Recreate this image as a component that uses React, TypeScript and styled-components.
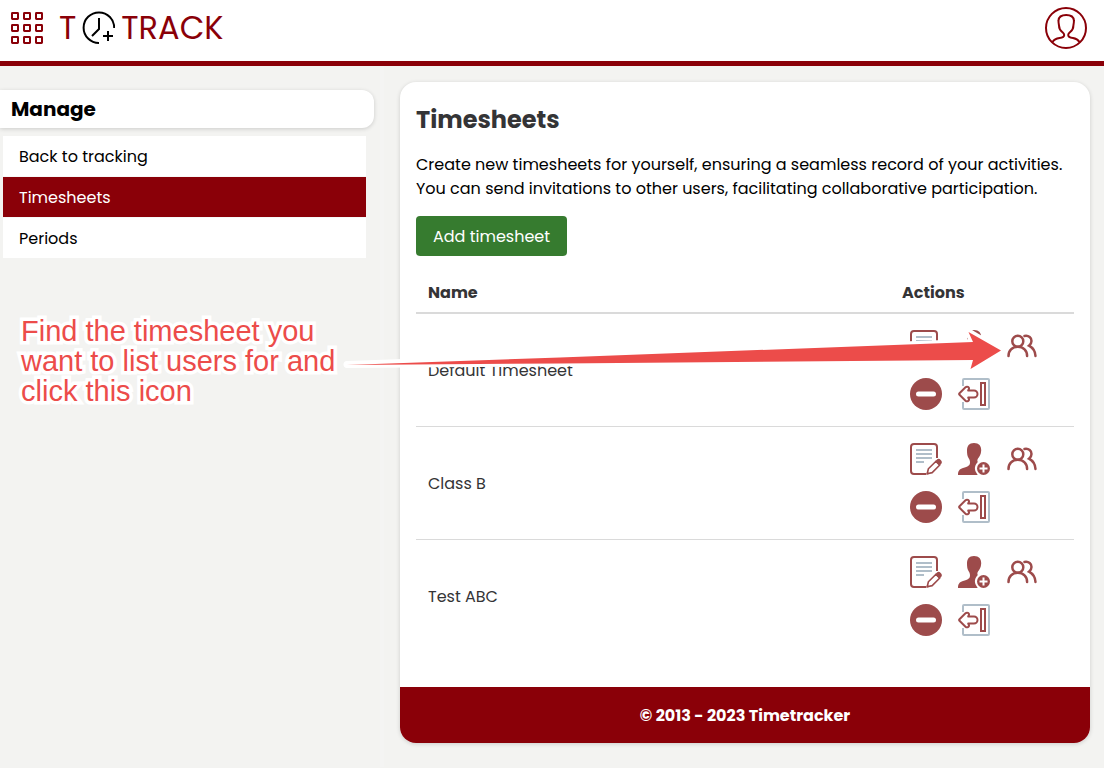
import React from 'react';
import styled, { createGlobalStyle } from 'styled-components';

const maroon = '#8a0008';
const iconRed = '#9d4b4b';
const iconGrey = '#b0bec9';

const GlobalStyle = createGlobalStyle`
  *, *::before, *::after { box-sizing: border-box; }
  body {
    margin: 0;
    background: #f3f3f1;
    color: #000;
    font-family: Poppins, Inter, sans-serif;
    font-size: 16px;
    line-height: 24px;
  }
`;

const Page = styled.div`
  position: relative;
  min-height: 100vh;
`;

const Header = styled.header`
  display: flex;
  align-items: center;
  height: 66px;
  padding: 0 16px 5px 10px;
  background: #fff;
  border-bottom: 5px solid ${maroon};
`;

const IconButton = styled.button`
  display: flex;
  padding: 0;
  border: 0;
  background: none;
  cursor: pointer;
`;

const Brand = styled.a`
  display: flex;
  align-items: center;
  gap: 6px;
  margin-left: 15px;
  margin-right: auto;
  color: ${maroon};
  font-size: 32px;
  line-height: 48px;
  text-decoration: none;
`;

const Columns = styled.div`
  display: grid;
  grid-template-columns: 384px minmax(0, 1fr);
`;

const Sidebar = styled.aside`
  padding: 24px 6px 24px 0;
  border-right: 4px solid #f4f4f3;
`;

const SidebarTitle = styled.h2`
  margin: 0 0 8px;
  padding: 5px 11px;
  background: #fff;
  border-radius: 0 12px 12px 0;
  box-shadow: 0 1px 4px rgba(0, 0, 0, 0.16);
  font-size: 20px;
  line-height: 28px;
  font-weight: 700;
`;

const Nav = styled.nav`
  display: grid;
  gap: 1px;
  margin: 0 8px 0 3px;
  background: #f8f8f7;
`;

const NavLink = styled.a<{ $active?: boolean }>`
  padding: 9px 16px 7px;
  background: ${(p) => (p.$active ? maroon : '#fff')};
  color: ${(p) => (p.$active ? '#fff' : '#000')};
  text-decoration: none;
`;

const Main = styled.main`
  padding: 16px 14px 24px 16px;
`;

const Card = styled.div`
  overflow: hidden;
  background: #fff;
  border-radius: 16px;
  box-shadow: 0 1px 4px rgba(0, 0, 0, 0.16);
`;

const Content = styled.section`
  padding: 21px 16px 35px;
`;

const Title = styled.h1`
  margin: 0 0 16px;
  color: #343436;
  font-size: 24px;
  line-height: 34px;
  font-weight: 700;
`;

const Intro = styled.p`
  margin: 0 0 15px;
`;

const AddButton = styled.button`
  height: 40px;
  padding: 2px 17px 0;
  border: 0;
  border-radius: 4px;
  background: #367b2f;
  color: #fff;
  font: inherit;
  cursor: pointer;
`;

const Table = styled.table`
  width: 100%;
  margin-top: 16px;
  border-collapse: separate;
  border-spacing: 0;
  color: #343436;
`;

const HeadCell = styled.th<{ $actions?: boolean }>`
  width: ${(p) => (p.$actions ? '184px' : 'auto')};
  padding: 9px 12px 7px;
  border-bottom: 2px solid #dadada;
  font-weight: 700;
  text-align: left;
`;

const Row = styled.tr`
  &:not(:last-child) > td { border-bottom: 1px solid #dadada; }
`;

const Cell = styled.td`
  padding: 8px 12px;
`;

const NameCell = styled(Cell)`
  padding: 9px 12px 7px;
`;

const Actions = styled.div`
  display: flex;
  flex-wrap: wrap;
`;

const ActionButton = styled(IconButton)`
  padding: 8px;
`;

const Footer = styled.footer`
  padding: 17px 16px 15px;
  background: ${maroon};
  color: #fff;
  font-weight: 700;
  text-align: center;
`;

const Note = styled.p`
  position: absolute;
  top: 316px;
  left: 21px;
  width: 328px;
  margin: 0;
  color: #ec4c4a;
  font-family: 'Liberation Sans', sans-serif;
  font-size: 29px;
  line-height: 30px;
  -webkit-text-stroke: 7px #fff;
  paint-order: stroke fill;
  stroke-linejoin: round;
  pointer-events: none;
`;

const Arrow = styled.svg`
  position: absolute;
  top: 320px;
  left: 336px;
  pointer-events: none;
`;

const GridIcon = () => (
  <svg width="34" height="34" viewBox="0 0 34 34" fill="none" stroke={maroon} strokeWidth="2">
    {[2, 14, 26].map((y) =>
      [2, 14, 26].map((x) => <rect key={`${x}-${y}`} x={x} y={y} width="6" height="6" rx="0.4" />),
    )}
  </svg>
);

const ClockIcon = () => (
  <svg width="33" height="34" viewBox="0 0 33 34" fill="none" stroke="#000" strokeWidth="2">
    <path d="M17 32A15.3 15.3 0 1 1 32.200 17" />
    <path d="M17 7v11l-7 7" />
    <path d="M26 20v10M21 25h10" />
  </svg>
);

const ProfileIcon = () => (
  <svg width="44" height="44" viewBox="0 0 44 44" fill="none" stroke={maroon} strokeWidth="2">
    <circle cx="22" cy="22" r="20" />
    <path d="M8.500 36c1.500-2.500 4-3.600 7-4 3-.3 4.700-1 4.700-3 0-1.500-.8-2-2-3-2.200-1.800-3.200-4-3.200-6.500-.5-2.500-.7-3.500-.5-5C14.800 10.500 17.500 9 22.200 9s7.400 1.500 7.700 5.500c.2 1.500 0 2.500-.5 5 0 2.500-1 4.700-3.200 6.500-1.200 1-2 1.500-2 3 0 2 1.700 2.700 4.700 3 3 .4 5.100 1.500 6.600 4" />
  </svg>
);

const EditIcon = () => (
  <svg width="32" height="32" viewBox="0 0 32 32" fill="none" stroke={iconRed} strokeWidth="2">
    <path d="M16 31H4a3 3 0 0 1-3-3V4a3 3 0 0 1 3-3h20a3 3 0 0 1 3 3v11" />
    <path d="M6 7h16M6 11h16M6 15h16M6 19h8" stroke={iconGrey} />
    <path d="m17.200 30.800 1.200-5L26 18.200l3.800 3.800-7.600 7.600z" strokeWidth="1.600" strokeLinejoin="round" />
    <path d="m25 18.400 2-2c1.200-.9 2.500-.7 3.700.6 1.300 1.200 1.500 2.600.6 3.700l-2 2zM16.300 31.700l.8-3 2.200 2.200z" fill={iconRed} stroke="none" />
  </svg>
);

const InviteIcon = () => (
  <svg width="32" height="32" viewBox="0 0 32 32" fill={iconRed}>
    <path d="M16 0c5 0 7.400 3 7.200 7.500-.2 4-1.700 6-3.200 8-.8 1.200-.8 2.500-.2 3.500-3 3-4 7-1.300 11l1.200 2H0c0-4 1.500-6 5-7 5-1.500 7-2.500 7-5.500 0-2-.5-3-1.200-4C9.300 13.500 9 10.500 9 7.500 9 3 11 0 16 0z" />
    <circle cx="25.500" cy="25.500" r="6.500" />
    <path d="M25.500 21.500v8M21.500 25.500h8" stroke="#fff" strokeWidth="2" />
  </svg>
);

const UsersIcon = () => (
  <svg width="32" height="32" viewBox="0 0 32 32" fill="none" stroke={iconRed} strokeWidth="2.500" strokeLinecap="round">
    <circle cx="11.800" cy="11.300" r="5.500" />
    <path d="M2.500 26c0-5.500 3.700-9.200 9.300-9.200s9.300 3.700 9.300 9.200M18.500 6c4.500-.8 7 2 7 5 0 2-1 3.500-2.500 4.700 3.700 2 6.200 5.300 6.500 10.300" />
  </svg>
);

const RemoveIcon = () => (
  <svg width="32" height="32" viewBox="0 0 32 32">
    <circle cx="16" cy="16" r="16" fill={iconRed} />
    <path d="M8.500 16h15" stroke="#fff" strokeWidth="5" strokeLinecap="round" />
  </svg>
);

const LeaveIcon = () => (
  <svg width="32" height="32" viewBox="0 0 32 32" fill="none" stroke={iconRed} strokeWidth="2">
    <path d="M5 8V2q0-1 1-1h24q1 0 1 1v28q0 1-1 1H6q-1 0-1-1v-6" stroke={iconGrey} />
    <path d="M23 5h4v22h-4z" />
    <path d="M1.500 16.800a1.200 1.200 0 0 1 0-1.600L7.500 9.300c1.600-1.400 4-.2 3.400 1.700l-.7 1.500h5.800a3.500 3.500 0 0 1 0 7h-5.800l.7 1.500c.6 1.900-1.800 3.100-3.400 1.700z" strokeLinejoin="round" />
  </svg>
);

const actions = [
  { label: 'Edit', Icon: EditIcon },
  { label: 'Invite user', Icon: InviteIcon },
  { label: 'List users', Icon: UsersIcon },
  { label: 'Remove', Icon: RemoveIcon },
  { label: 'Leave', Icon: LeaveIcon },
];

const timesheets = ['Default Timesheet', 'Class B', 'Test ABC'];

export default function App() {
  return (
    <>
      <GlobalStyle />
      <Page>
        <Header>
          <IconButton type="button" aria-label="Menu"><GridIcon /></IconButton>
          <Brand href="#">
            <span>T</span>
            <ClockIcon />
            <span>TRACK</span>
          </Brand>
          <IconButton type="button" aria-label="Profile"><ProfileIcon /></IconButton>
        </Header>
        <Columns>
          <Sidebar>
            <SidebarTitle>Manage</SidebarTitle>
            <Nav>
              <NavLink href="#">Back to tracking</NavLink>
              <NavLink href="#" $active>Timesheets</NavLink>
              <NavLink href="#">Periods</NavLink>
            </Nav>
          </Sidebar>
          <Main>
            <Card>
              <Content>
                <Title>Timesheets</Title>
                <Intro>
                  Create new timesheets for yourself, ensuring a seamless record of your activities.
                  You can send invitations to other users, facilitating collaborative participation.
                </Intro>
                <AddButton type="button">Add timesheet</AddButton>
                <Table>
                  <thead>
                    <tr>
                      <HeadCell>Name</HeadCell>
                      <HeadCell $actions>Actions</HeadCell>
                    </tr>
                  </thead>
                  <tbody>
                    {timesheets.map((name) => (
                      <Row key={name}>
                        <NameCell>{name}</NameCell>
                        <Cell>
                          <Actions>
                            {actions.map(({ label, Icon }) => (
                              <ActionButton key={label} type="button" aria-label={label}><Icon /></ActionButton>
                            ))}
                          </Actions>
                        </Cell>
                      </Row>
                    ))}
                  </tbody>
                </Table>
              </Content>
              <Footer>© 2013 - 2023 Timetracker</Footer>
            </Card>
          </Main>
        </Columns>
        <Note>Find the timesheet you want to list users for and click this icon</Note>
        <Arrow width="668" height="60" viewBox="336 320 668 60">
          <path
            d="M347 364.500 973 342.500 968.500 332 1000 350.500 970.500 369 973 360z"
            fill="#fff"
            stroke="#fff"
            strokeWidth="7"
            strokeLinejoin="round"
          />
          <path d="M347 365 560 357.500 973 342 968.500 332 1001 350.500 970.500 369 973 360 560 363.500z" fill="#ec4c4a" />
        </Arrow>
      </Page>
    </>
  );
}
